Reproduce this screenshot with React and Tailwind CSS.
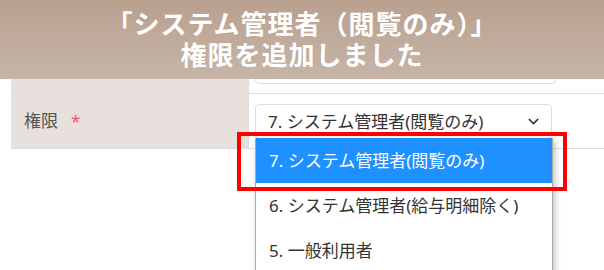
import React from 'react';
import { ChevronDown } from 'lucide-react';

const options = [
  { label: '7. システム管理者(閲覧のみ)', active: true },
  { label: '6. システム管理者(給与明細除く)' },
  { label: '5. 一般利用者' },
];

const App = () => {
  return (
    <div
      className="relative w-[604px] h-[270px] overflow-hidden bg-white"
      style={{ fontFamily: '"Noto Sans", "Noto Sans CJK JP", sans-serif' }}
    >
      {/* form table */}
      <div className="pl-[11px] pt-[39px]">
        <div className="flex h-[55px] border-b border-[#ddd]">
          <div className="w-[238px] shrink-0 bg-[#e8e0dd] border-r border-[#ddd]" />
          <div className="flex-1 pl-[6px] pt-[9px]">
            <div className="w-[301px] h-[36px] rounded border border-[#ddd]" />
          </div>
        </div>
        <div className="flex h-[55px] border-b border-[#ddd]">
          <div className="w-[238px] shrink-0 bg-[#e8e0dd] border-r border-[#ddd] flex items-center pl-[13px] text-[17px] text-[#555]">
            権限
            <span className="ml-[13px] text-[#f0506e]">*</span>
          </div>
          <div className="flex-1 pl-[6px] pt-[10px]">
            <div className="w-[297px] h-[35px] rounded border border-[#ddd] flex items-center justify-between pl-[12px] pr-[9px] text-[17px] text-[#333]">
              <span>7. システム管理者(閲覧のみ)</span>
              <ChevronDown size={17} strokeWidth={2} />
            </div>
          </div>
        </div>
      </div>

      {/* open dropdown */}
      <div className="absolute left-[255px] top-[138px] w-[298px] bg-white border-x border-[#aaa] shadow-[2px_2px_6px_rgba(0,0,0,0.25)]">
        {options.map((o) => (
          <div
            key={o.label}
            className={`h-[45px] flex items-center pl-[13px] text-[17px] ${
              o.active ? 'bg-[#1e90ff] text-white' : 'text-[#333]'
            }`}
          >
            {o.label}
          </div>
        ))}
      </div>

      {/* highlight frame */}
      <div className="absolute left-[237px] top-[132px] w-[330px] h-[59px] border-4 border-[#ff0000]" />

      {/* caption banner */}
      <div className="absolute left-0 top-0 w-full h-[79px] bg-gradient-to-b from-[#b9a08f] to-[#c6b5a8] flex items-center justify-center text-white text-[26px] font-bold leading-[31px] tracking-[1px] text-center">
        <p>
          「システム管理者（閲覧のみ）」
          <br />
          権限を追加しました
        </p>
      </div>
    </div>
  );
};

export default App;
